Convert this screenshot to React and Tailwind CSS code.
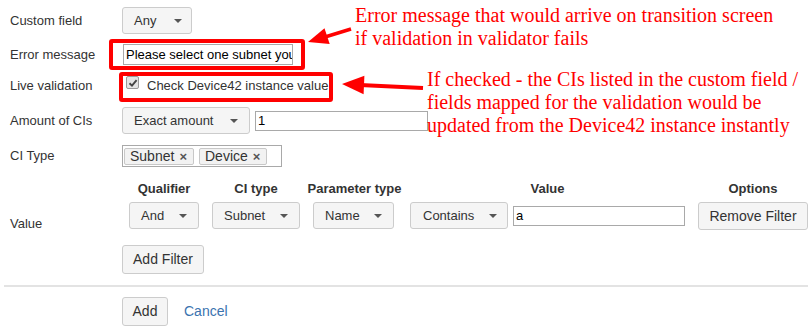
import React from "react";

function Caret() {
  return <span className="w-0 h-0 border-x-[4px] border-x-transparent border-t-[4px] border-t-[#555]" />;
}

function Select({ label, className }) {
  return (
    <div className={"shrink-0 flex items-center justify-between bg-[#f5f5f5] border border-[#ccc] rounded-[3px] text-[13px] text-[#333] " + className}>
      <span>{label}</span>
      <Caret />
    </div>
  );
}

function Tag({ label, className }) {
  return (
    <span className={"shrink-0 flex items-center h-[17px] bg-[#f2f2f2] border border-[#c8c8c8] rounded-[2px] text-[14px] text-[#333] pl-[5px] " + className}>
      {label}
      <span className="ml-[5px] text-[13px] font-bold text-[#555] leading-none">×</span>
    </span>
  );
}

export default function App() {
  return (
    <div className="relative w-[808px] h-[326px] overflow-hidden bg-white font-['Liberation_Sans',Arial,sans-serif] text-[13px] text-[#333]">
      <div className="pt-[7px]">
        {/* Custom field */}
        <div className="flex items-center h-[27px] pl-[10px]">
          <div className="w-[112px] shrink-0">Custom field</div>
          <Select label="Any" className="w-[70px] h-[27px] pl-[11px] pr-[9px]" />
        </div>

        {/* Error message */}
        <div className="flex items-center h-[21px] mt-[10px] pl-[10px]">
          <div className="w-[113px] shrink-0">Error message</div>
          <div className="shrink-0 w-[170px] h-[21px] border border-[#a9a9a9] pl-[2px] flex items-center overflow-hidden whitespace-nowrap text-black">
            Please select one subnet you would like to use
          </div>
        </div>

        {/* Live validation */}
        <div className="flex items-center h-[22px] mt-[10px] pl-[10px]">
          <div className="w-[116px] shrink-0">Live validation</div>
          <span className="shrink-0 w-[13px] h-[13px] mb-[7px] border border-[#9a9a9a] bg-[#e4e4e4] rounded-[2px] flex items-center justify-center">
            <svg width="10" height="10" viewBox="0 0 10 10">
              <path d="M1.5 5.2 L4 7.6 L8.6 2.2" fill="none" stroke="#444" strokeWidth="1.9" />
            </svg>
          </span>
          <span className="ml-[8px]">Check Device42 instance value</span>
        </div>

        {/* Amount of CIs */}
        <div className="flex items-center h-[27px] mt-[10px] pl-[10px]">
          <div className="w-[112px] shrink-0">Amount of CIs</div>
          <Select label="Exact amount" className="w-[128px] h-[27px] pl-[11px] pr-[11px]" />
          <div className="shrink-0 ml-[5px] w-[173px] h-[20px] border border-[#a9a9a9] pl-[2px] flex items-center text-black">1</div>
        </div>

        {/* CI Type */}
        <div className="flex items-center h-[22px] mt-[11px] pl-[10px]">
          <div className="w-[112px] shrink-0">CI Type</div>
          <div className="shrink-0 w-[160px] h-[22px] border border-[#a9a9a9] flex items-center gap-[5px] pl-px">
            <Tag label="Subnet" className="w-[70px]" />
            <Tag label="Device" className="w-[68px]" />
          </div>
        </div>

        {/* Filters */}
        <div className="flex mt-[13px] pl-[10px]">
          <div className="w-[112px] shrink-0 pt-[36px] leading-[16px]">Value</div>
          <div className="flex shrink-0">
            <div className="w-[84px] shrink-0 flex flex-col">
              <div className="h-[18px] flex items-center justify-center font-bold">Qualifier</div>
              <div className="mt-[4px] pl-[7px]">
                <Select label="And" className="w-[70px] h-[27px] pl-[11px] pr-[11px]" />
              </div>
            </div>
            <div className="w-[100px] shrink-0 flex flex-col">
              <div className="h-[18px] flex items-center justify-center font-bold">CI type</div>
              <div className="mt-[4px] pl-[6px]">
                <Select label="Subnet" className="w-[88px] h-[27px] pl-[11px] pr-[11px]" />
              </div>
            </div>
            <div className="w-[97px] shrink-0 flex flex-col">
              <div className="h-[18px] flex items-center justify-center font-bold whitespace-nowrap">Parameter type</div>
              <div className="mt-[4px] pl-[7px]">
                <Select label="Name" className="w-[81px] h-[27px] pl-[11px] pr-[11px]" />
              </div>
            </div>
            <div className="w-[289px] shrink-0 flex flex-col">
              <div className="h-[18px] flex items-center justify-center font-bold">Value</div>
              <div className="mt-[4px] pl-[7px] flex items-center h-[27px]">
                <Select label="Contains" className="w-[98px] h-[27px] pl-[12px] pr-[10px]" />
                <div className="shrink-0 ml-[5px] w-[172px] h-[20px] border border-[#a9a9a9] pl-[2px] flex items-center text-black">a</div>
              </div>
            </div>
            <div className="w-[122px] shrink-0 flex flex-col">
              <div className="h-[18px] flex items-center justify-center font-bold">Options</div>
              <div className="mt-[4px] pl-[6px]">
                <div className="w-[110px] h-[28px] flex items-center justify-center bg-[#f5f5f5] border border-[#ccc] rounded-[3px] text-[14px] whitespace-nowrap">
                  Remove Filter
                </div>
              </div>
            </div>
          </div>
        </div>

        {/* Add Filter */}
        <div className="flex mt-[13px] pl-[122px]">
          <div className="w-[82px] h-[29px] flex items-center justify-center bg-[#f5f5f5] border border-[#ccc] rounded-[3px] text-[14px]">
            Add Filter
          </div>
        </div>

        <div className="mt-[11px] ml-[4px] h-[2px] bg-[#e3e3e3]" />

        {/* Add / Cancel */}
        <div className="flex items-center mt-[10px] pl-[122px]">
          <div className="w-[46px] h-[29px] flex items-center justify-center bg-[#f5f5f5] border border-[#ccc] rounded-[3px] text-[14px]">
            Add
          </div>
          <span className="ml-[16px] text-[14px] text-[#3b73af]">Cancel</span>
        </div>
      </div>

      {/* Annotations */}
      <div className="absolute left-[109px] top-[39px] w-[196px] h-[31px] border-[4px] border-[#ff0000] rounded-[3px]" />
      <div className="absolute left-[119px] top-[72px] w-[214px] h-[30px] border-[4px] border-[#ff0000] rounded-[3px]" />

      <svg className="absolute left-0 top-0 pointer-events-none" width="808" height="326">
        <line x1="351" y1="29" x2="325" y2="37" stroke="#ff0000" strokeWidth="3.5" />
        <polygon points="308,42 324.5,28.3 329.7,43.9" fill="#ff0000" />
        <line x1="423" y1="88" x2="360" y2="85" stroke="#ff0000" strokeWidth="4" />
        <polygon points="342,84 364.4,75.8 363.6,94.2" fill="#ff0000" />
      </svg>

      <div className="absolute left-[355px] top-[4px] whitespace-nowrap font-['Liberation_Serif',serif] text-[20px] leading-[23px] text-[#ff0000]">
        Error message that would arrive on transition screen
        <br />
        if validation in validator fails
      </div>
      <div className="absolute left-[427px] top-[68px] whitespace-nowrap font-['Liberation_Serif',serif] text-[20px] leading-[23px] text-[#ff0000]">
        If checked - the CIs listed in the custom field /
        <br />
        fields mapped for the validation would be
        <br />
        updated from the Device42 instance instantly
      </div>
    </div>
  );
}
